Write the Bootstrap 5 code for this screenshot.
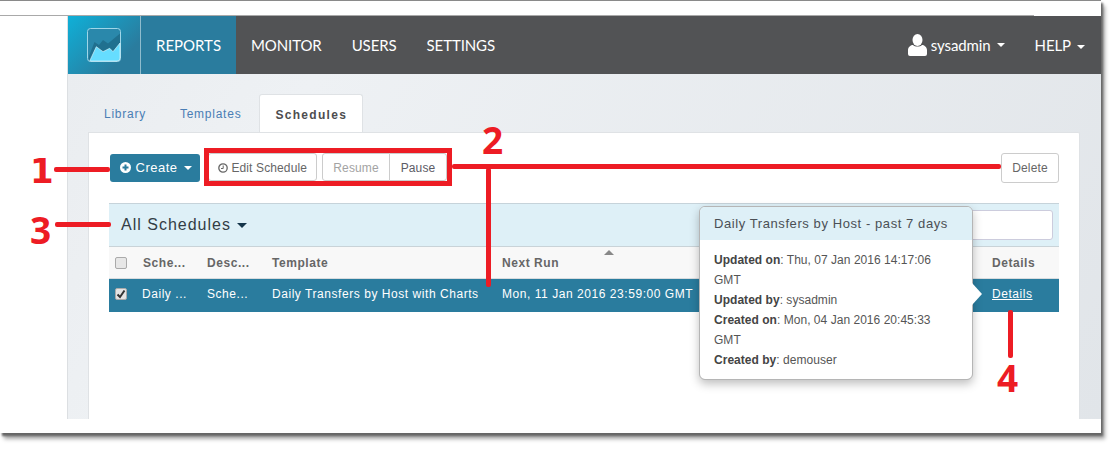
<!DOCTYPE html>
<html lang="en">
<head>
    <meta charset="UTF-8">
    <meta name="viewport" content="width=device-width, initial-scale=1.0">
    <title>Schedules</title>
    <link rel="stylesheet" href="https://cdn.jsdelivr.net/npm/bootstrap@5.3.0/dist/css/bootstrap.min.css">
    <style>
        body {
            margin: 0;
            height: 452px;
            overflow: hidden;
            background: #fff;
            font-family: "Liberation Sans", Arial, sans-serif;
            position: relative;
        }
        .shot {
            width: 1101px;
            height: 433px;
            border-top: 1px solid #8a8a8a;
            box-shadow: 2px 3px 2px #666, 4px 6px 4px #aaa;
            background: #fff;
            padding-top: 14px;
        }
        .top-line { width: 1034px; height: 1px; background: #a9a9a9; }
        .app { margin-left: 67px; border-left: 1px solid #dcdfe2; height: 403px; }
        .app-nav { height: 58px; padding: 0; background: #525355; font-family: Lato, sans-serif; }
        .logo-box {
            width: 73px; height: 58px;
            background: linear-gradient(135deg, #0fb0d8, #2a7c9e 75%);
            border-right: 1px solid #8fbccd;
        }
        .app-nav .navbar-nav .nav-link { color: #fff; font-size: 15px; letter-spacing: -.1px; padding: 0 15px; line-height: 58px; }
        .app-nav .navbar-nav .nav-link.active { background: #2a7c9e; color: #fff; letter-spacing: 0; }
        .app-nav .navbar-nav .nav-link.first-link { width: 95px; }
        .app-nav .navbar-nav .user-link { height: 58px; }
        .app-nav .dropdown-toggle::after { margin-left: 6px; vertical-align: 2px; border-top-width: 4px; border-left-width: 4px; border-right-width: 4px; }
        .app-nav .user-link.dropdown-toggle::after { vertical-align: 0; }
        .nav-right { margin-right: 1px; }
        .content-area {
            height: 345px;
            padding: 20px 21px 0 20px;
            background: linear-gradient(120deg, #eaedf0 0%, #eef1f4 20%, #e1e5e9 100%);
        }
        .sched-tabs { border: 0; padding-left: 0; height: 38px; }
        .sched-tabs .nav-link {
            border: 0; margin: 0;
            padding: 11px 16px 0;
            height: 38px;
            font-size: 12px;
            letter-spacing: .75px;
            color: #4a7eb5;
            background: transparent;
            border-radius: 3px 3px 0 0;
        }
        .sched-tabs .nav-item + .nav-item .nav-link { padding-left: 18px; padding-right: 17px; }
        .sched-tabs .nav-item + .nav-item .nav-link.active {
            background: #fff; color: #4d4d4f; font-weight: 700; letter-spacing: 1.3px;
            border: 1px solid #dfe2e5; border-bottom: 0;
            margin-left: 1px;
            width: 104px;
            padding: 11px 0 0 15px;
        }
        .sched-card {
            height: 287px;
            border: 1px solid #dfe2e5;
            border-radius: 0 2px 0 0;
            border-bottom: 0;
            padding: 20px 20px 0 20px;
        }
        .tool-row { height: 50px; }
        .act-btn {
            font-size: 12px; height: 28px; padding: 1px 11px 0; line-height: 26px; letter-spacing: .12px;
            color: #666; background: #fff; border: 1px solid #ccc; border-radius: 3px;
        }
        .act-btn.is-off { color: #a3a3a3; }
        .create-btn {
            width: 90px; height: 28px; padding: 0 0 1px 2px; margin: 1px 0 0 1px; font-size: 13px; letter-spacing: .5px; line-height: 26px;
            color: #fff; background: #2a7c9e; border: 0; border-radius: 3px;
        }
        .create-btn.dropdown-toggle::after { vertical-align: 2px; margin-left: 6px; border-top-width: 4px; border-left-width: 4px; border-right-width: 4px; }
        .edit-group { margin-left: 8px; margin-right: 5px; width: 109px; }
        .edit-group .act-btn { width: 109px; padding: 1px 0 0; }
        .run-group .act-btn:first-child { width: 68px; padding: 1px 0 0; }
        .run-group .act-btn:last-child { width: 58px; padding: 1px 0 0; margin-left: -1px; color: #5c5c66; }
        .delete-btn { width: 58px; height: 30px; padding: 0; }
        .list-head {
            height: 44px;
            background: #def0f7;
            border-top: 1px solid #c6d3da;
            border-bottom: 1px solid #c9d3d8;
            padding: 0 6px 0 12px;
        }
        .list-title { font-size: 16px; letter-spacing: 1px; color: #333d45; }
        .list-title.dropdown-toggle::after { margin-left: 6px; vertical-align: 2px; border-top-width: 5px; border-left-width: 5px; border-right-width: 5px; color: #14354a; }
        .find-input { width: 200px; height: 30px; border: 1px solid #ccd; border-radius: 3px; padding: 0; margin-top: -1px; }
        .sched-table { table-layout: fixed; width: 950px; margin: 0; font-size: 12px; letter-spacing: .55px; }
        .sched-table th {
            height: 31px; padding: 2px 0 0 7px; background: #f8f8f8; color: #666; font-weight: 700;
            border-bottom: 1px solid #d8dcdf; vertical-align: middle; position: relative;
        }
        .sched-table th:nth-child(2) { padding-left: 8px; }
        .sched-table td {
            height: 34px; padding: 0 0 2px 7px; background: #2a7c9e; color: #fff; border: 0; vertical-align: middle;
            white-space: nowrap; overflow: hidden;
        }
        .sched-table th.col-check, .sched-table td.col-check { padding-left: 6px; }
        .sched-table td a { color: #fff; }
        .tick-box {
            display: block; appearance: none; width: 12px; height: 12px; margin: 0;
            background: #e7e7e7; border: 1px solid #aaa; border-radius: 2px;
        }
        .tick-box:checked {
            background: #e4e4e4 url("data:image/svg+xml,%3Csvg xmlns='http://www.w3.org/2000/svg' viewBox='0 0 12 12'%3E%3Cpath d='M2.5 6.5 5 9l4.5-6.5' fill='none' stroke='%23333' stroke-width='2'/%3E%3C/svg%3E") center/12px no-repeat;
        }
        .sort-mark {
            position: absolute; left: 109px; top: 3px;
            border-left: 5px solid transparent; border-right: 5px solid transparent; border-bottom: 5px solid #888;
        }
        .info-pop {
            position: absolute; left: 699px; top: 206px; width: 274px; height: 174px; max-width: none;
            font-family: "Liberation Sans", Arial, sans-serif;
            border: 1px solid #b5b5b5; border-radius: 6px;
            box-shadow: 0 4px 10px rgba(0,0,0,.25);
        }
        .info-pop .popover-header {
            height: 33px; padding: 0 14px; line-height: 33px; background: #def0f7; border: 0; margin: 0;
            font-size: 13px; font-weight: 400; letter-spacing: .58px; color: #4a4f55;
            border-radius: 5px 5px 0 0;
        }
        .info-pop .popover-body { padding: 10px 14px; font-size: 12px; line-height: 20px; letter-spacing: .03px; color: #555; }
        .info-pop .popover-body b { color: #444; }
        .pop-tip {
            position: absolute; left: 272px; top: 76px;
            border-top: 11px solid transparent; border-bottom: 11px solid transparent; border-left: 10px solid #fff;
        }
        .mark-line { position: absolute; background: #ed1c24; border-radius: 2px; z-index: 2000; }
        .mark-num {
            position: absolute; color: #ed1c24; font: 700 37px/37px "Open Sans", sans-serif; z-index: 2000;
        }
        .mark-num.base-one { font: 700 34px/37px "DejaVu Sans", sans-serif; }
        .mark-box { position: absolute; left: 204px; top: 148px; width: 248px; height: 38px; border: 5px solid #ed1c24; z-index: 2000; }
    </style>
</head>
<body>
    <div class="shot">
        <div class="top-line"></div>
        <div class="app">
            <nav class="navbar navbar-expand app-nav">
                <div class="logo-box d-flex align-items-center justify-content-center">
                    <svg width="34" height="34" viewBox="0 0 34 34">
                        <rect x=".5" y=".5" width="33" height="33" rx="3" fill="#2a88ab" stroke="#9fd6e8"/>
                        <path d="M2 28 7.5 14 12 17 16 12 21 15.5 33 5.5V20L2 33z" fill="#20708f"/>
                        <path d="M2.7 33 9.3 18.7 16 23.7 22.7 20.3 26 23.7 33 15V30a3 3 0 0 1-3 3z" fill="#66ddff" stroke="#e8fbff" stroke-width=".6"/>
                    </svg>
                </div>
                <ul class="navbar-nav">
                    <li class="nav-item"><a class="nav-link active first-link" href="#">REPORTS</a></li>
                    <li class="nav-item"><a class="nav-link" href="#">MONITOR</a></li>
                    <li class="nav-item"><a class="nav-link" href="#">USERS</a></li>
                    <li class="nav-item"><a class="nav-link" href="#">SETTINGS</a></li>
                </ul>
                <ul class="navbar-nav ms-auto nav-right">
                    <li class="nav-item">
                        <a class="nav-link dropdown-toggle user-link d-flex align-items-center" href="#">
                            <svg class="me-1" width="19" height="22" viewBox="0 0 19 22"><ellipse cx="9.5" cy="6" rx="5" ry="6" fill="#fff"/><path d="M0 20v-4c0-3 3-5 5-5 2 2 7 2 9 0 2 0 5 2 5 5v4a2 2 0 0 1-2 2H2a2 2 0 0 1-2-2z" fill="#fff"/></svg>
                            sysadmin
                        </a>
                    </li>
                    <li class="nav-item"><a class="nav-link dropdown-toggle" href="#">HELP</a></li>
                </ul>
            </nav>
            <div class="content-area">
                <ul class="nav nav-tabs sched-tabs">
                    <li class="nav-item"><a class="nav-link" href="#">Library</a></li>
                    <li class="nav-item"><a class="nav-link" href="#">Templates</a></li>
                    <li class="nav-item"><a class="nav-link active" href="#">Schedules</a></li>
                </ul>
                <div class="card sched-card">
                    <div class="tool-row d-flex align-items-start">
                        <button class="btn create-btn dropdown-toggle">
                            <svg width="11" height="11" viewBox="0 0 11 11" style="vertical-align:-1px"><circle cx="5.5" cy="5.5" r="5.5" fill="#fff"/><path d="M5.5 2.5v6M2.5 5.5h6" stroke="#2a7c9e" stroke-width="2"/></svg>
                            Create</button>
                        <div class="edit-group">
                            <button class="btn act-btn">
                                <svg width="10" height="10" viewBox="0 0 10 10" style="vertical-align:-1px"><circle cx="5" cy="5" r="4.2" fill="none" stroke="#666" stroke-width="1.3"/><path d="M5.2 2.5V5.5H3" fill="none" stroke="#666"/></svg>
                                Edit Schedule
                            </button>
                        </div>
                        <div class="btn-group run-group">
                            <button class="btn act-btn is-off">Resume</button>
                            <button class="btn act-btn">Pause</button>
                        </div>
                        <button class="btn act-btn delete-btn ms-auto">Delete</button>
                    </div>
                    <div class="list-head d-flex align-items-center justify-content-between">
                        <a class="list-title dropdown-toggle text-decoration-none" href="#">All Schedules</a>
                        <input class="find-input" type="text">
                    </div>
                    <table class="table sched-table">
                        <colgroup>
                            <col style="width:26px"><col style="width:65px"><col style="width:65px"><col style="width:230px"><col style="width:490px"><col style="width:74px">
                        </colgroup>
                        <thead>
                            <tr>
                                <th class="col-check"><input class="tick-box" type="checkbox"></th>
                                <th>Sche...</th>
                                <th>Desc...</th>
                                <th>Template</th>
                                <th>Next Run<span class="sort-mark"></span></th>
                                <th>Details</th>
                            </tr>
                        </thead>
                        <tbody>
                            <tr>
                                <td class="col-check"><input class="tick-box" type="checkbox" checked></td>
                                <td>Daily ...</td>
                                <td>Sche...</td>
                                <td>Daily Transfers by Host with Charts</td>
                                <td>Mon, 11 Jan 2016 23:59:00 GMT</td>
                                <td><a href="#">Details</a></td>
                            </tr>
                        </tbody>
                    </table>
                </div>
            </div>
        </div>
    </div>

    <div class="popover info-pop">
        <div class="pop-tip"></div>
        <h3 class="popover-header">Daily Transfers by Host - past 7 days</h3>
        <div class="popover-body">
            <b>Updated on</b>: Thu, 07 Jan 2016 14:17:06 GMT<br>
            <b>Updated by</b>: sysadmin<br>
            <b>Created on</b>: Mon, 04 Jan 2016 20:45:33 GMT<br>
            <b>Created by</b>: demouser
        </div>
    </div>

    <div class="mark-box"></div>
    <div class="mark-line" style="left:54px;top:167px;width:56px;height:5px"></div>
    <div class="mark-line" style="left:452px;top:164px;width:549px;height:5px"></div>
    <div class="mark-line" style="left:486px;top:168px;width:5px;height:119px"></div>
    <div class="mark-line" style="left:55px;top:222px;width:56px;height:5px"></div>
    <div class="mark-line" style="left:1008px;top:310px;width:5px;height:48px"></div>
    <div class="mark-num base-one" style="left:30px;top:153px">1</div>
    <div class="mark-num" style="left:482px;top:121px">2</div>
    <div class="mark-num" style="left:30px;top:211px">3</div>
    <div class="mark-num" style="left:997px;top:359px">4</div>

    <script src="https://cdn.jsdelivr.net/npm/bootstrap@5.3.0/dist/js/bootstrap.bundle.min.js"></script>
</body>
</html>
